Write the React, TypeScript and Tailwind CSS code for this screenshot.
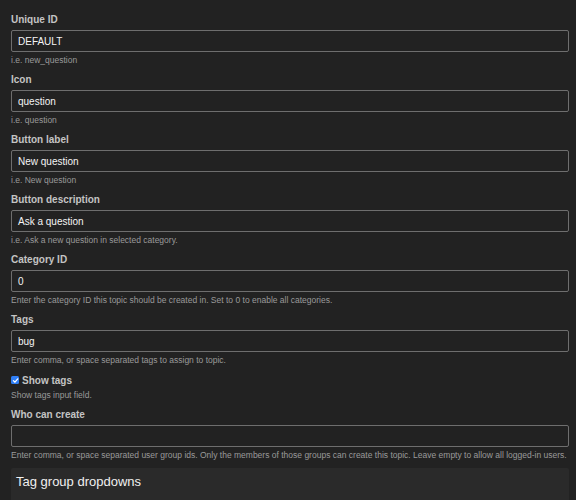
import React from 'react';

type Field = {
  label: string;
  value: string;
  hint: string;
};

const fields: Field[] = [
  { label: 'Unique ID', value: 'DEFAULT', hint: 'i.e. new_question' },
  { label: 'Icon', value: 'question', hint: 'i.e. question' },
  { label: 'Button label', value: 'New question', hint: 'i.e. New question' },
  { label: 'Button description', value: 'Ask a question', hint: 'i.e. Ask a new question in selected category.' },
  { label: 'Category ID', value: '0', hint: 'Enter the category ID this topic should be created in. Set to 0 to enable all categories.' },
  { label: 'Tags', value: 'bug', hint: 'Enter comma, or space separated tags to assign to topic.' },
];

const TextField: React.FC<Field> = ({ label, value, hint }) => (
  <div className="mb-[7px]">
    <label className="block text-[10px] leading-[14px] font-bold text-[#c4c4c4] mb-[3px]">{label}</label>
    <div className="h-[22px] border border-[#6e6e6e] rounded-[2px] bg-[#222222] px-[6px] flex items-center text-[10px] text-[#f4f4f4]">
      {value}
    </div>
    <p className="mt-[2px] text-[8.5px] leading-[12px] text-[#9a9a9a] whitespace-nowrap">{hint}</p>
  </div>
);

export default function App() {
  return (
    <div
      className="w-[576px] h-[500px] overflow-hidden bg-[#222222] pl-[11px] pr-[7px] pt-[13px]"
      style={{ fontFamily: '"Liberation Sans", Arial, sans-serif' }}
    >
      {fields.map((f) => (
        <TextField key={f.label} {...f} />
      ))}

      <div className="flex items-center h-[14px] gap-[3px]">
        <span className="w-[8px] h-[8px] rounded-[1.5px] bg-[#2f7ef5] flex items-center justify-center">
          <svg viewBox="0 0 10 10" className="w-[7px] h-[7px]">
            <path d="M2 5.2 L4.2 7.4 L8.2 2.6" fill="none" stroke="white" strokeWidth="1.8" strokeLinecap="round" strokeLinejoin="round" />
          </svg>
        </span>
        <span className="text-[10px] font-bold text-[#c4c4c4]">Show tags</span>
      </div>
      <p className="mt-[2px] mb-[7px] text-[8.5px] leading-[12px] text-[#9a9a9a]">Show tags input field.</p>

      <TextField
        label="Who can create"
        value=""
        hint="Enter comma, or space separated user group ids. Only the members of those groups can create this topic. Leave empty to allow all logged-in users."
      />

      <div className="mt-[1px] bg-[#2a2a2a] rounded-[2px] h-[60px] px-[5px] pt-[4px]">
        <h3 className="text-[13px] leading-[20px] text-[#f0f0f0]">Tag group dropdowns</h3>
      </div>
    </div>
  );
}
